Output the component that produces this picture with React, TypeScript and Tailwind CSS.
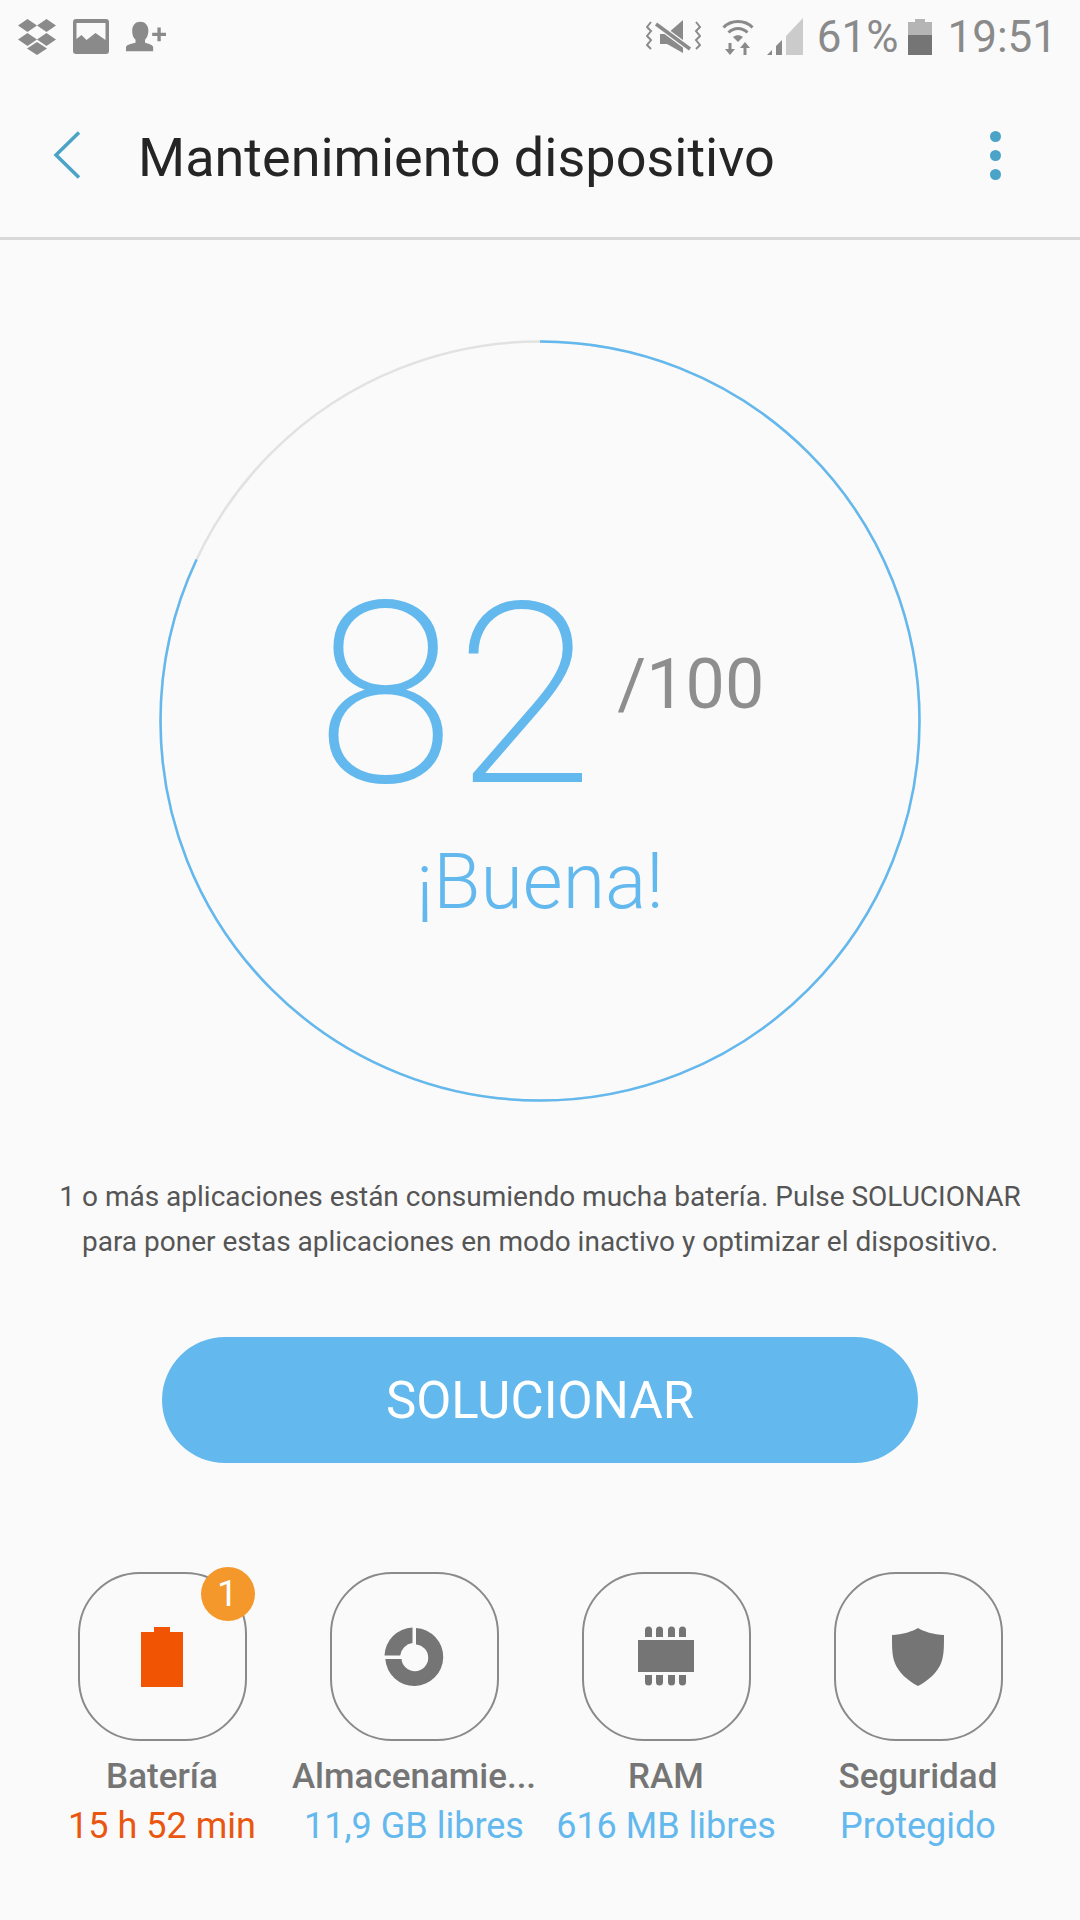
import React from 'react';

const tiles = [
  { label: 'Batería', value: '15 h 52 min', valueClass: 'text-[#e9560f]', icon: 'battery' },
  { label: 'Almacenamie...', value: '11,9 GB libres', valueClass: 'text-[#63b8ee]', icon: 'storage' },
  { label: 'RAM', value: '616 MB libres', valueClass: 'text-[#63b8ee]', icon: 'ram' },
  { label: 'Seguridad', value: 'Protegido', valueClass: 'text-[#63b8ee]', icon: 'shield' },
];

const TileIcon = ({ name }: { name: string }) => {
  if (name === 'battery') {
    return (
      <svg width="60" height="60" viewBox="0 0 60 60" fill="#f15503">
        <path d="M9 5h13V0h16v5h13v55H9z" />
      </svg>
    );
  }
  if (name === 'storage') {
    return (
      <svg width="60" height="60" viewBox="0 0 60 60" fill="#757575">
        <path d="M32 1a29 29 0 1 1-30.700 31H17.500a13.400 13.400 0 1 0 14.500-14.600z" />
        <path d="M28.500 0.500v15.600a14 14 0 0 0-12.300 12.400H0.500A29 29 0 0 1 28.500 0.500z" />
      </svg>
    );
  }
  if (name === 'ram') {
    return (
      <svg width="60" height="62" viewBox="0 0 60 62" fill="#757575">
        <rect x="2" y="14" width="56" height="32" />
        {[9, 20, 32, 43].map((x) => (
          <g key={x}>
            <path d={`M${x} 11V4a3.500 3.500 0 0 1 7 0v7z`} />
            <path d={`M${x} 49v7a3.500 3.500 0 0 0 7 0v-7z`} />
          </g>
        ))}
      </svg>
    );
  }
  return (
    <svg width="60" height="60" viewBox="0 0 60 60" fill="#757575">
      <path d="M30 1c5 3.500 16 6.500 26 7 0 12 0 20-2.500 27C50 45 40 54 30 59 20 54 10 45 6.500 35 4 28 4 20 4 8c10-.500 21-3.500 26-7z" />
    </svg>
  );
};

const StatusLeft = () => (
  <div className="flex items-center">
    {/* dropbox */}
    <svg width="38" height="36" viewBox="0 0 38 36" fill="#8a8a8a">
      <path d="M9.500 0 19 6.500 9.500 13 0 6.500z" />
      <path d="M28.500 0 38 6.500 28.500 13 19 6.500z" />
      <path d="M9.500 14 19 20.500 9.500 27 0 20.500z" />
      <path d="M28.500 14 38 20.500 28.500 27 19 20.500z" />
      <path d="M19 23 29 29.500 19 36 9 29.500z" />
    </svg>
    {/* picture */}
    <svg className="ml-[17px]" width="36" height="35" viewBox="0 0 36 35" fill="#8a8a8a">
      <path fillRule="evenodd" d="M3 0h30a3 3 0 0 1 3 3v29a3 3 0 0 1-3 3H3a3 3 0 0 1-3-3V3a3 3 0 0 1 3-3zm.500 4v16l5-4 5 5 9-7 10 7V4z" />
    </svg>
    {/* add person */}
    <svg className="ml-[17px]" width="40" height="32" viewBox="0 0 42 32" fill="#8a8a8a">
      <path d="M15 0c5 0 8.500 3.500 8.500 9.500 0 4-1.500 7.500-3.500 9.500v3c3 1 7.500 1.500 8.500 4.500V31H0v-4.500C1 23.500 6.500 23 10 22v-3c-2.500-2-3.500-5.500-3.500-9.500C6.500 3.500 10 0 15 0z" />
      <path d="M33 6h3.500v5.500H42V15h-5.500v5.500H33V15h-5.500v-3.500H33z" />
    </svg>
  </div>
);

const StatusRight = () => (
  <div className="flex items-center text-[#8a8a8a]">
    {/* vibrate + mute */}
    <svg width="55" height="35" viewBox="0 0 55 35" fill="none">
      <path d="M5 3 1 8l4 4-4 5 4 4-4 5 4 4" stroke="#8a8a8a" strokeWidth="2" />
      <path d="M50 3l4 5-4 4 4 5-4 4 4 5-4 4" stroke="#8a8a8a" strokeWidth="2" />
      <path d="M14 15h7L37 1v33L21 25h-7z" fill="#8a8a8a" />
      <path d="M10 5 44 30" stroke="#fafafa" strokeWidth="6" />
      <path d="M10 5 44 30" stroke="#8a8a8a" strokeWidth="3.500" />
    </svg>
    {/* wifi with arrows */}
    <svg className="ml-[21px]" width="32" height="38" viewBox="0 0 32 38" fill="none">
      <path d="M1.500 9.500C9 1.500 23 1.500 30.500 9.500" stroke="#8a8a8a" strokeWidth="3" />
      <path d="M6.500 14.500C12 9 20 9 25.500 14.500" stroke="#8a8a8a" strokeWidth="3" />
      <path d="M11 19c3-2.500 7-2.500 10 0l-5 5z" fill="#8a8a8a" />
      <path d="M8 37l-5-6h3.500v-6h3v6H13z" fill="#8a8a8a" />
      <path d="M23 24l5 6h-3.500v7h-3v-7H18z" fill="#8a8a8a" />
    </svg>
    {/* signal */}
    <svg className="ml-[13px]" width="36" height="37" viewBox="0 0 36 37">
      <path d="M0 37l5-5v5z" fill="#8a8a8a" />
      <path d="M9 28l6-6v15H9z" fill="#8a8a8a" />
      <path d="M19 18 36 0v37H19z" fill="#cbcbcb" />
    </svg>
    <span className="ml-[14px] text-[44px] leading-none">61%</span>
    {/* battery */}
    <svg className="ml-[10px]" width="24" height="36" viewBox="0 0 24 36">
      <path d="M0 3h7V0h10v3h7v13H0z" fill="#b5b5b5" />
      <rect y="16" width="24" height="20" fill="#757575" />
    </svg>
    <span className="ml-[15px] text-[44px] leading-none">19:51</span>
  </div>
);

const ScoreRing = () => (
  <div className="relative mx-auto mt-[100px] flex h-[762px] w-[762px] flex-col items-center">
    <svg className="absolute inset-0" width="762" height="762" viewBox="0 0 762 762" fill="none">
      <circle cx="381" cy="381" r="379.500" stroke="#e2e2e2" strokeWidth="2.500" />
      <circle
        cx="381"
        cy="381"
        r="379.500"
        stroke="#63b8ee"
        strokeWidth="2.500"
        pathLength={100}
        strokeDasharray="82 18"
        transform="rotate(-90 381 381)"
      />
    </svg>
    <div className="mt-[230px] flex h-[252px] w-full items-start pl-[157px]">
      <span className="text-[252px] leading-[252px] font-extralight text-[#63b8ee]">82</span>
      <span className="mt-[79px] ml-[24px] text-[70px] leading-[70px] text-[#8e8e8e]">/100</span>
    </div>
    <span className="mt-[15px] text-[77px] leading-[90px] font-light text-[#63b8ee]">¡Buena!</span>
  </div>
);

const App = () => {
  return (
    <div className="h-[1920px] w-[1080px] overflow-hidden bg-[#fafafa] font-['Roboto',sans-serif]">
      {/* STATUS BAR */}
      <div className="flex h-[73px] items-center justify-between pr-[23px] pl-[18px]">
        <StatusLeft />
        <StatusRight />
      </div>

      {/* HEADER */}
      <div className="flex h-[167px] items-center justify-between border-b-[3px] border-[#d8d8d8] pr-[79px] pl-[53px]">
        <div className="flex items-center">
          <svg width="28" height="48" viewBox="0 0 28 48" fill="none">
            <path d="M26 1.500 3 24l23 22.500" stroke="#4ba3c7" strokeWidth="3.500" />
          </svg>
          <span className="ml-[57px] pt-[5px] text-[54px] leading-none text-[#252525]">Mantenimiento dispositivo</span>
        </div>
        <div className="flex flex-col gap-[8px]">
          <div className="h-[11px] w-[11px] rounded-full bg-[#4ba3c7]" />
          <div className="h-[11px] w-[11px] rounded-full bg-[#4ba3c7]" />
          <div className="h-[11px] w-[11px] rounded-full bg-[#4ba3c7]" />
        </div>
      </div>

      <ScoreRing />

      {/* MESSAGE */}
      <p className="mt-[72px] text-center text-[28px] leading-[45px] text-[#555555]">
        1 o más aplicaciones están consumiendo mucha batería. Pulse SOLUCIONAR
        <br />
        para poner estas aplicaciones en modo inactivo y optimizar el dispositivo.
      </p>

      {/* BUTTON */}
      <div className="mx-auto mt-[73px] flex h-[126px] w-[756px] items-center justify-center rounded-[63px] bg-[#63b8ee]">
        <span className="text-[51px] leading-none text-white">SOLUCIONAR</span>
      </div>

      {/* TILES */}
      <div className="mt-[109px] grid grid-cols-4 px-[36px]">
        {tiles.map((tile) => (
          <div key={tile.label} className="flex flex-col items-center">
            <div className="relative flex h-[169px] w-[169px] items-center justify-center rounded-[62px] border-2 border-[#8a8a8a]">
              <TileIcon name={tile.icon} />
              {tile.icon === 'battery' && (
                <div className="absolute top-[-7px] right-[-10px] flex h-[54px] w-[54px] items-center justify-center rounded-full bg-[#f4982b] text-[37px] text-white">
                  1
                </div>
              )}
            </div>
            <span className="mt-[14px] text-[35px] leading-[44px] font-medium whitespace-nowrap text-[#757575]">
              {tile.label}
            </span>
            <span className={`mt-[5px] text-[36px] leading-[44px] whitespace-nowrap ${tile.valueClass}`}>
              {tile.value}
            </span>
          </div>
        ))}
      </div>
    </div>
  );
};

export default App;
